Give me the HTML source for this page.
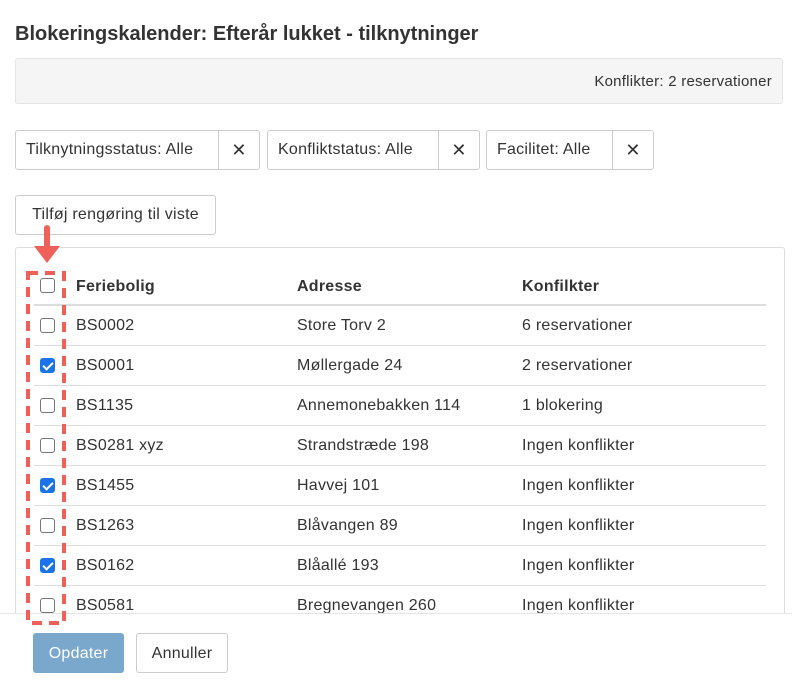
<!DOCTYPE html>
<html><head><style>
body{margin:0;width:792px;height:679px;background:#fff;font-family:"Liberation Sans",Helvetica,Arial,sans-serif;color:#333;position:relative;overflow:hidden;font-size:16px;letter-spacing:0.25px}
.abs{position:absolute}
h1{position:absolute;left:15px;top:23px;margin:0;font-size:20px;font-weight:bold;color:#333;letter-spacing:0}
.bar{left:15px;top:58px;width:768px;height:46px;background:#f5f5f5;border:1px solid #e5e5e5;box-sizing:border-box;border-radius:3px}
.bar span{position:absolute;right:10px;top:14px;font-size:15px}
.flt{top:130px;height:40px;border:1px solid #ccc;border-radius:3px;box-sizing:border-box;display:flex;font-size:16px}
.flt .l{flex:1;padding:0 10px;line-height:38px;border-right:1px solid #ccc}
.flt .x{width:40px;text-align:center;line-height:38px;font-size:18px}
.btn{border:1px solid #ccc;border-radius:3px;box-sizing:border-box;text-align:center;font-size:16px}
.panel{left:15px;top:247px;width:770px;height:420px;border:1px solid #ddd;border-radius:3px;box-sizing:border-box}
.row{position:absolute;left:34px;width:732px;height:40px;border-bottom:1px solid #ddd;box-sizing:border-box}
.row div{position:absolute;top:11px;font-size:16px}
.cb{position:absolute;left:6px;top:12px;width:15px;height:15px;border:1px solid #767676;border-radius:3px;box-sizing:border-box;background:#fff}
.cb.on{background:#1a73e8;border-color:#1a73e8}
.cb.on::after{content:"";position:absolute;left:4px;top:1px;width:4px;height:8px;border:solid #fff;border-width:0 2px 2px 0;transform:rotate(45deg)}
.foot{left:0;top:613px;width:792px;height:66px;background:#fff;border-top:1px solid #e5e5e5}
</style></head><body>
<h1>Blokeringskalender: Efterår lukket - tilknytninger</h1>
<div class="abs bar"><span>Konflikter: 2 reservationer</span></div>
<div class="abs flt" style="left:15px;width:245px"><div class="l">Tilknytningsstatus: Alle</div><div class="x">✕</div></div>
<div class="abs flt" style="left:267px;width:213px"><div class="l">Konfliktstatus: Alle</div><div class="x">✕</div></div>
<div class="abs flt" style="left:486px;width:168px"><div class="l">Facilitet: Alle</div><div class="x">✕</div></div>
<div class="abs btn" style="left:15px;top:195px;width:201px;height:40px;line-height:38px">Tilføj rengøring til viste</div>
<div class="abs panel"></div>
<div class="row" style="top:266px;border-bottom:2px solid #ddd"><span class="cb" style="top:12px"></span><div style="left:42px;top:12px;font-weight:bold">Feriebolig</div><div style="left:263px;top:12px;font-weight:bold">Adresse</div><div style="left:488px;top:12px;font-weight:bold">Konfilkter</div></div>
<div class="row" style="top:306px"><span class="cb"></span><div style="left:42px">BS0002</div><div style="left:263px">Store Torv 2</div><div style="left:488px">6 reservationer</div></div>
<div class="row" style="top:346px"><span class="cb on"></span><div style="left:42px">BS0001</div><div style="left:263px">Møllergade 24</div><div style="left:488px">2 reservationer</div></div>
<div class="row" style="top:386px"><span class="cb"></span><div style="left:42px">BS1135</div><div style="left:263px">Annemonebakken 114</div><div style="left:488px">1 blokering</div></div>
<div class="row" style="top:426px"><span class="cb"></span><div style="left:42px">BS0281 xyz</div><div style="left:263px">Strandstræde 198</div><div style="left:488px">Ingen konflikter</div></div>
<div class="row" style="top:466px"><span class="cb on"></span><div style="left:42px">BS1455</div><div style="left:263px">Havvej 101</div><div style="left:488px">Ingen konflikter</div></div>
<div class="row" style="top:506px"><span class="cb"></span><div style="left:42px">BS1263</div><div style="left:263px">Blåvangen 89</div><div style="left:488px">Ingen konflikter</div></div>
<div class="row" style="top:546px"><span class="cb on"></span><div style="left:42px">BS0162</div><div style="left:263px">Blåallé 193</div><div style="left:488px">Ingen konflikter</div></div>
<div class="row" style="top:586px"><span class="cb"></span><div style="left:42px">BS0581</div><div style="left:263px">Bregnevangen 260</div><div style="left:488px">Ingen konflikter</div></div>
<div class="abs foot"></div>
<div class="abs btn" style="left:33px;top:633px;width:91px;height:40px;line-height:40px;background:#7aa7cc;border-color:#7aa7cc;color:#fff">Opdater</div>
<div class="abs btn" style="left:136px;top:633px;width:92px;height:40px;line-height:40px">Annuller</div>
<svg class="abs" style="left:0;top:0" width="792" height="679">
<rect x="28" y="273" width="36" height="350" fill="none" stroke="#f0605a" stroke-width="4" stroke-dasharray="10,7"/>
<line x1="47" y1="228" x2="47" y2="250" stroke="#f0605a" stroke-width="6" stroke-linecap="round"/>
<polygon points="34,246 60,246 47,263" fill="#f0605a"/>
</svg>
</body></html>
